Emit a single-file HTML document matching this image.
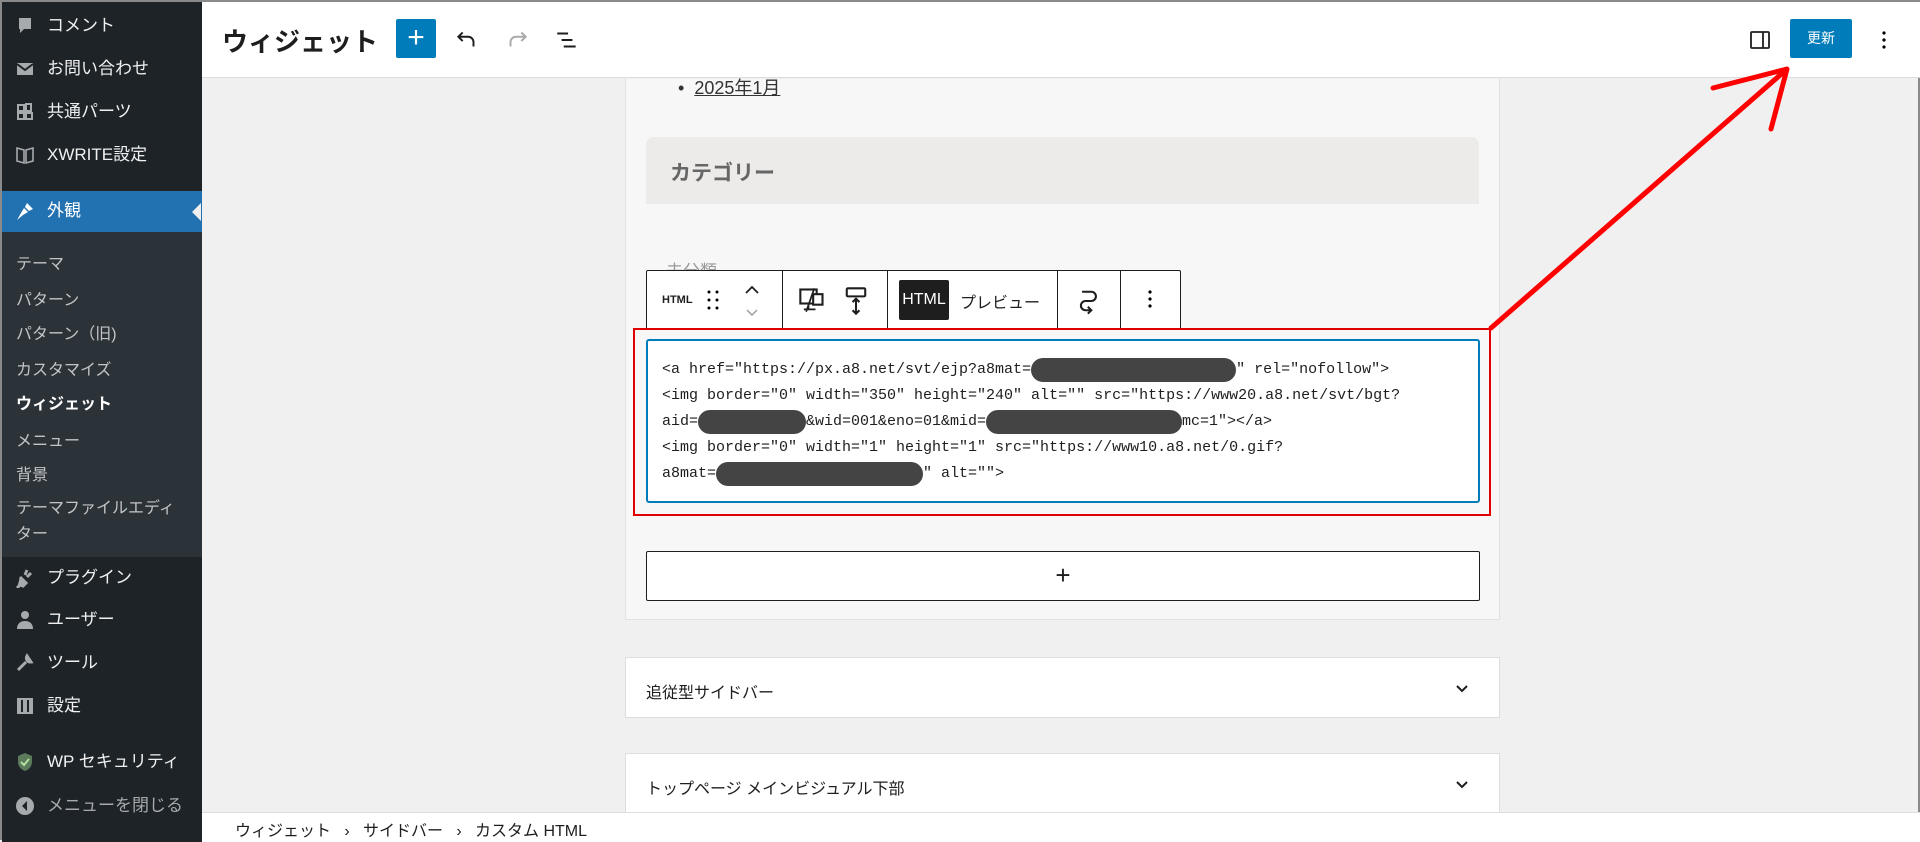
<!DOCTYPE html>
<html><head><meta charset="utf-8"><style>
*{margin:0;padding:0;box-sizing:border-box}
body{width:1920px;height:840px;overflow:hidden;background:#f0f0f0;font-family:"Liberation Sans","Noto Sans CJK JP",sans-serif;position:relative;border:2px solid #8a8a8a}
.abs{position:absolute}
#side{left:0;top:0;width:200px;height:840px;background:#1d2327}
.mi{position:absolute;left:0;width:200px;color:#f0f0f1;font-size:17px;line-height:20px}
.mi .t{position:absolute;left:45px;top:0;white-space:nowrap}
.mi .ic{position:absolute;left:12px;top:0;width:22px;height:20px}
.sub{position:absolute;left:14px;color:#c3c4c7;font-size:16px;white-space:nowrap}
#hdr{left:200px;top:0;width:1718px;height:76px;background:#fff;border-bottom:1px solid #ddd}
.code{position:absolute;left:660px;font-family:"Liberation Mono",monospace;font-size:15px;line-height:24px;height:24px;color:#1e1e1e;white-space:pre}
.red{display:inline-block;background:#444;border-radius:12px;height:24px;vertical-align:top}
.panel{position:absolute;background:#fff;border:1px solid #ddd}
</style></head><body>
<div id="side" class="abs">
 <div class="mi" style="top:14px"><svg class="ic" viewBox="0 0 20 20"><path d="M4 2h12v11H9l-4 4v-4H4z" fill="#a7aaad"/></svg><span class="t">コメント</span></div>
 <div class="mi" style="top:57px"><svg class="ic" viewBox="0 0 20 20"><rect x="2" y="4" width="16" height="12" fill="#a7aaad"/><path d="M2 5l8 6 8-6" stroke="#1d2327" stroke-width="2" fill="none"/></svg><span class="t">お問い合わせ</span></div>
 <div class="mi" style="top:100px"><svg class="ic" viewBox="0 0 20 20"><path d="M3 3h6v6H3zM11 2h5v7h-5zM3 11h6v6H3zM11 11h6v6h-6z" fill="none" stroke="#a7aaad" stroke-width="2"/></svg><span class="t">共通パーツ</span></div>
 <div class="mi" style="top:143px"><svg class="ic" viewBox="0 0 20 20"><path d="M2 3l7 2v13l-7-2zM18 3l-7 2v13l7-2z" fill="none" stroke="#a7aaad" stroke-width="1.6"/></svg><span class="t">XWRITE設定</span></div>
 <div class="abs" style="left:0;top:189px;width:200px;height:41px;background:#2271b1"></div>
 <div class="abs" style="left:190px;top:201px;width:0;height:0;border:9px solid transparent;border-right-color:#f0f0f0;border-left:0"></div>
 <div class="mi" style="top:199px;color:#fff"><svg class="ic" viewBox="0 0 20 20"><path d="M12 2l6 6-4 2-4-4zM9 7l4 4-5 3-6 5 4-7z" fill="#fff"/></svg><span class="t">外観</span></div>
 <div class="abs" style="left:0;top:230px;width:200px;height:325px;background:#2c3338"></div>
 <div class="sub" style="top:248px">テーマ</div>
 <div class="sub" style="top:284px">パターン</div>
 <div class="sub" style="top:318px">パターン（旧)</div>
 <div class="sub" style="top:354px">カスタマイズ</div>
 <div class="sub" style="top:388px;color:#fff;font-weight:bold">ウィジェット</div>
 <div class="sub" style="top:425px">メニュー</div>
 <div class="sub" style="top:459px">背景</div>
 <div class="sub" style="top:494px;line-height:26px">テーマファイルエディ<br>ター</div>
 <div class="mi" style="top:566px"><svg class="ic" viewBox="0 0 20 20"><path d="M12 2l-2 5M16 5l-4 4M5 9l6 6-3 3-3-1-3 3" stroke="#a7aaad" stroke-width="3" fill="#a7aaad"/></svg><span class="t">プラグイン</span></div>
 <div class="mi" style="top:608px"><svg class="ic" viewBox="0 0 20 20"><circle cx="10" cy="5" r="4" fill="#a7aaad"/><path d="M2 19c0-6 4-8 8-8s8 2 8 8z" fill="#a7aaad"/></svg><span class="t">ユーザー</span></div>
 <div class="mi" style="top:651px"><svg class="ic" viewBox="0 0 20 20"><path d="M3 17l8-8M12 3a4 4 0 0 0 4 6l-2-3z" stroke="#a7aaad" stroke-width="3" fill="#a7aaad"/></svg><span class="t">ツール</span></div>
 <div class="mi" style="top:694px"><svg class="ic" viewBox="0 0 20 20"><rect x="2" y="2" width="16" height="16" fill="#a7aaad"/><path d="M7 4v12M13 4v12" stroke="#1d2327" stroke-width="2"/></svg><span class="t">設定</span></div>
 <div class="mi" style="top:750px"><svg class="ic" viewBox="0 0 20 20"><path d="M10 1l7 3v6c0 5-4 8-7 9-3-1-7-4-7-9V4z" fill="#5b7b5b"/><path d="M6 10l3 3 5-6" stroke="#b5e0a0" stroke-width="2" fill="none"/></svg><span class="t">WP セキュリティ</span></div>
 <div class="mi" style="top:794px;color:#a7aaad"><svg class="ic" viewBox="0 0 20 20"><circle cx="10" cy="10" r="9" fill="#a7aaad"/><path d="M12 5l-5 5 5 5z" fill="#1d2327"/></svg><span class="t">メニューを閉じる</span></div>
</div>
<div id="hdr" class="abs">
 <div class="abs" style="left:20px;top:20px;font-size:26px;font-weight:bold;color:#1e1e1e">ウィジェット</div>
 <div class="abs" style="left:194px;top:17px;width:40px;height:39px;background:#007cba;border-radius:2px;color:#fff;font-size:30px;line-height:38px;text-align:center">+</div>
 <svg class="abs" style="left:252px;top:25px" width="26" height="26" viewBox="0 0 24 24"><path d="M8 5L4 9l4 4M4 9h9a5 5 0 0 1 5 5v4" stroke="#1e1e1e" stroke-width="1.8" fill="none"/></svg>
 <svg class="abs" style="left:302px;top:25px" width="26" height="26" viewBox="0 0 24 24"><path d="M16 5l4 4-4 4M20 9h-9a5 5 0 0 0-5 5v4" stroke="#aaa" stroke-width="1.8" fill="none"/></svg>
 <svg class="abs" style="left:352px;top:25px" width="26" height="26" viewBox="0 0 24 24"><path d="M3 6h10M7 12h10M9 18h11" stroke="#1e1e1e" stroke-width="1.8"/></svg>
 <svg class="abs" style="left:1546px;top:26px" width="24" height="24" viewBox="0 0 24 24"><rect x="3" y="4" width="18" height="16" rx="1" stroke="#1e1e1e" stroke-width="1.8" fill="none"/><path d="M15 4v16" stroke="#1e1e1e" stroke-width="1.8"/></svg>
 <div class="abs" style="left:1588px;top:17px;width:62px;height:39px;background:#007cba;border-radius:2px;color:#fff;font-size:14px;line-height:39px;text-align:center">更新</div>
 <svg class="abs" style="left:1670px;top:26px" width="24" height="24" viewBox="0 0 24 24"><circle cx="12" cy="5" r="1.6"/><circle cx="12" cy="12" r="1.6"/><circle cx="12" cy="19" r="1.6"/></svg>
</div>
<div class="abs" style="left:623px;top:77px;width:875px;height:541px;background:#f7f7f7;border:1px solid #e2e2e2;border-top:0"></div>
<div class="abs" style="left:676px;top:72px;font-size:18px;color:#333">•&nbsp;&nbsp;<span style="text-decoration:underline">2025年1月</span></div>
<div class="abs" style="left:644px;top:135px;width:833px;height:67px;background:#ecebe9;border-radius:8px 8px 0 0"></div>
<div class="abs" style="left:668px;top:155px;font-size:21px;font-weight:bold;color:#666">カテゴリー</div>
<div class="abs" style="left:664px;top:255px;font-size:17px;color:#999">未分類</div>
<div class="abs" style="left:644px;top:268px;width:535px;height:58px;background:#fff;border:1px solid #1e1e1e;border-bottom:0;border-radius:2px 2px 0 0"></div>
<div class="abs" style="left:780px;top:268px;width:1px;height:58px;background:#1e1e1e"></div>
<div class="abs" style="left:885px;top:268px;width:1px;height:58px;background:#1e1e1e"></div>
<div class="abs" style="left:1055px;top:268px;width:1px;height:58px;background:#1e1e1e"></div>
<div class="abs" style="left:1118px;top:268px;width:1px;height:58px;background:#1e1e1e"></div>
<div class="abs" style="left:660px;top:292px;font-size:11px;font-weight:bold;color:#1e1e1e">HTML</div>
<svg class="abs" style="left:704px;top:287px" width="14" height="22" viewBox="0 0 14 22"><circle cx="3" cy="3" r="1.5"/><circle cx="11" cy="3" r="1.5"/><circle cx="3" cy="11" r="1.5"/><circle cx="11" cy="11" r="1.5"/><circle cx="3" cy="19" r="1.5"/><circle cx="11" cy="19" r="1.5"/></svg>
<svg class="abs" style="left:738px;top:280px" width="24" height="40" viewBox="0 0 24 40"><path d="M6 11l6-6 6 6" stroke="#1e1e1e" stroke-width="1.8" fill="none"/><path d="M7 28l5 5 5-5" stroke="#999" stroke-width="1.4" fill="none"/></svg>
<svg class="abs" style="left:796px;top:284px" width="28" height="28" viewBox="0 0 24 24"><rect x="2" y="3" width="14" height="12" stroke="#1e1e1e" stroke-width="1.8" fill="none"/><rect x="13" y="7" width="8" height="9" stroke="#1e1e1e" stroke-width="1.8" fill="#fff"/><path d="M5 20h10M9 15v5M14 2L7 22" stroke="#1e1e1e" stroke-width="1.5"/></svg>
<svg class="abs" style="left:840px;top:284px" width="28" height="30" viewBox="0 0 24 26"><rect x="4" y="2" width="16" height="7" rx="1" stroke="#1e1e1e" stroke-width="1.8" fill="none"/><path d="M12 11v13M9 14l3-3 3 3M9 21l3 3 3-3" stroke="#1e1e1e" stroke-width="1.8" fill="none"/></svg>
<div class="abs" style="left:897px;top:278px;width:50px;height:40px;background:#1e1e1e;border-radius:2px;color:#fff;font-size:16px;line-height:40px;text-align:center">HTML</div>
<div class="abs" style="left:958px;top:287px;font-size:16px;color:#1e1e1e">プレビュー</div>
<svg class="abs" style="left:1073px;top:284px" width="28" height="30" viewBox="0 0 24 26"><path d="M6 5h8a4 4 0 0 1 0 8H9a4 4 0 0 0 0 8h5M11 18l3 3-3 3" stroke="#1e1e1e" stroke-width="1.8" fill="none"/></svg>
<svg class="abs" style="left:1136px;top:285px" width="24" height="24" viewBox="0 0 24 24"><circle cx="12" cy="5" r="1.6"/><circle cx="12" cy="12" r="1.6"/><circle cx="12" cy="19" r="1.6"/></svg>
<div class="abs" style="left:631px;top:326px;width:858px;height:188px;border:2px solid #e00000"></div>
<div class="abs" style="left:644px;top:337px;width:834px;height:164px;background:#fff;border:2px solid #007cba;border-radius:3px"></div>
<div class="code" style="top:356px">&lt;a href="https://px.a8.net/svt/ejp?a8mat=<span class="red" style="width:205px"></span>" rel="nofollow"&gt;</div>
<div class="code" style="top:382px">&lt;img border="0" width="350" height="240" alt="" src="https://www20.a8.net/svt/bgt?</div>
<div class="code" style="top:408px">aid=<span class="red" style="width:108px"></span>&amp;wid=001&amp;eno=01&amp;mid=<span class="red" style="width:196px"></span>mc=1"&gt;&lt;/a&gt;</div>
<div class="code" style="top:434px">&lt;img border="0" width="1" height="1" src="https://www10.a8.net/0.gif?</div>
<div class="code" style="top:460px">a8mat=<span class="red" style="width:207px"></span>" alt=""&gt;</div>
<div class="abs" style="left:644px;top:549px;width:834px;height:50px;background:#fff;border:1px solid #1e1e1e;border-radius:2px;font-size:26px;line-height:46px;text-align:center;color:#1e1e1e">+</div>
<div class="panel" style="left:623px;top:655px;width:875px;height:61px"></div>
<div class="abs" style="left:644px;top:677px;font-size:16px;color:#1e1e1e">追従型サイドバー</div>
<svg class="abs" style="left:1450px;top:676px" width="20" height="20" viewBox="0 0 20 20"><path d="M5 8l5 5 5-5" stroke="#1e1e1e" stroke-width="2" fill="none"/></svg>
<div class="panel" style="left:623px;top:751px;width:875px;height:80px"></div>
<div class="abs" style="left:644px;top:773px;font-size:16px;color:#1e1e1e">トップページ メインビジュアル下部</div>
<svg class="abs" style="left:1450px;top:772px" width="20" height="20" viewBox="0 0 20 20"><path d="M5 8l5 5 5-5" stroke="#1e1e1e" stroke-width="2" fill="none"/></svg>
<div class="abs" style="left:200px;top:810px;width:1718px;height:30px;background:#fff;border-top:1px solid #ddd"></div>
<div class="abs" style="left:233px;top:815px;font-size:16px;color:#1e1e1e;white-space:pre">ウィジェット   ›   サイドバー   ›   カスタム HTML</div>
<svg class="abs" style="left:0;top:0" width="1920" height="840"><path d="M1489 326L1785 67M1711 86L1785 67L1769 127" stroke="#f00" stroke-width="5" fill="none" stroke-linecap="round" stroke-linejoin="round"/></svg>
</body></html>
